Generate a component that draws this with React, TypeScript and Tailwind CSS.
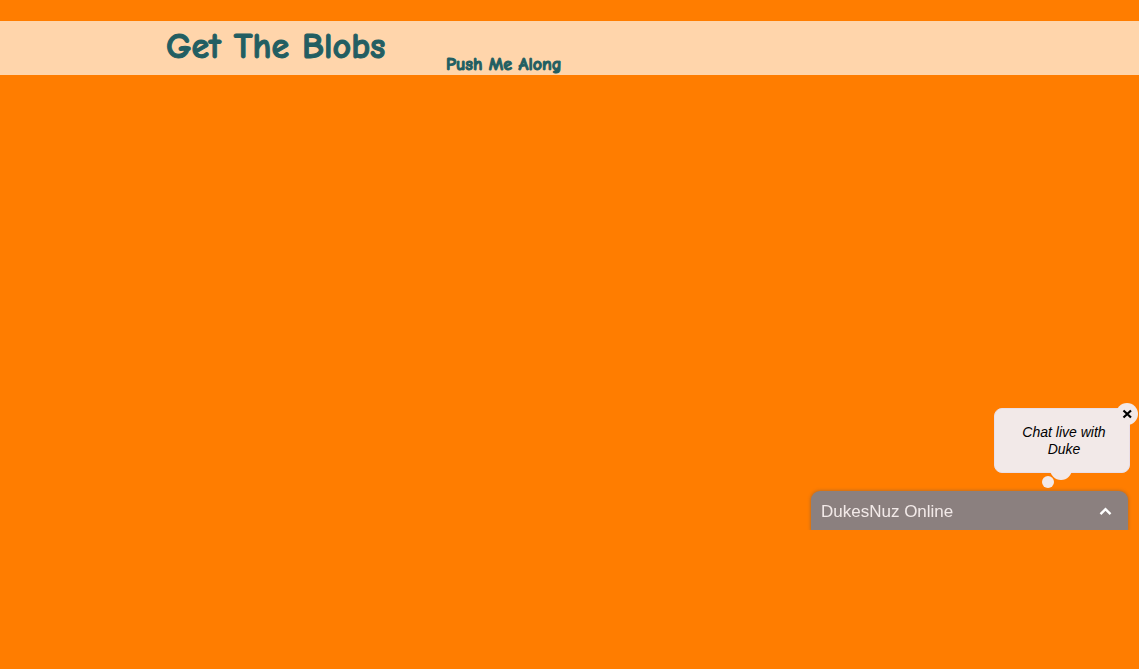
import React from "react";

function Header() {
  return (
    <header className="mt-[21px] flex h-[54px] items-end bg-[#ffd5ab] pl-[166px] font-['Comic_Sans_MS','Comic_Neue','Open_Sans',sans-serif] font-bold text-[#225e62]">
      <h1 className="w-[280px] whitespace-nowrap pb-1 text-4xl leading-[48px] [-webkit-text-stroke:1px_#225e62]">Get The Blobs</h1>
      <p className="text-lg leading-5 [-webkit-text-stroke:1px_#225e62]">Push Me Along</p>
    </header>
  );
}

function ChatBubble() {
  return (
    <div className="relative mr-2 h-[83px] w-[136px]">
      <div className="flex h-[65px] items-center justify-center rounded-lg border border-[#e9dfe8] bg-[#f2e9e8] pl-6 pr-5 text-center text-sm italic leading-[17px] text-black">
        <p>Chat live with Duke</p>
      </div>
      <svg className="absolute left-0 top-0" width="136" height="83" fill="#f2e9e8" aria-hidden="true">
        <circle cx="67" cy="61" r="11" />
        <circle cx="54" cy="74" r="6" />
      </svg>
      <button
        type="button"
        aria-label="Close"
        className="absolute -right-2 -top-[5px] flex size-[22px] items-center justify-center rounded-full bg-[#f2e9e8]"
      >
        <svg width="10" height="10" viewBox="0 0 10 10" stroke="#000" strokeWidth="2.2" fill="none" aria-hidden="true">
          <path d="M1.5 1.5L9 8.5M9 1.5L1.5 8.5" />
        </svg>
      </button>
    </div>
  );
}

function ChatWidget() {
  return (
    <aside className="fixed bottom-[139px] right-px flex flex-col items-end font-['Liberation_Sans',Arial,sans-serif]">
      <ChatBubble />
      <div className="-mt-1 overflow-hidden pl-1 pr-[10px] pt-1">
        <button
          type="button"
          className="flex h-[39px] w-[317px] items-center justify-between rounded-t-[9px] bg-[#8b807f] pl-[10px] pr-4 text-[17px] leading-5 text-[#f2e9e8] shadow-[0_0_3px_1px_rgba(100,85,80,0.35)]"
        >
          <span className="pt-[2px]">DukesNuz Online</span>
          <svg width="13" height="9" viewBox="0 0 13 9" fill="none" stroke="#fff" strokeWidth="2.4" className="mt-[2px]" aria-hidden="true">
            <path d="M1.5 7.2L6.5 2.2L11.5 7.2" />
          </svg>
        </button>
      </div>
    </aside>
  );
}

export default function App() {
  return (
    <div className="flow-root min-h-screen bg-[#ff7d00]">
      <Header />
      <ChatWidget />
    </div>
  );
}
